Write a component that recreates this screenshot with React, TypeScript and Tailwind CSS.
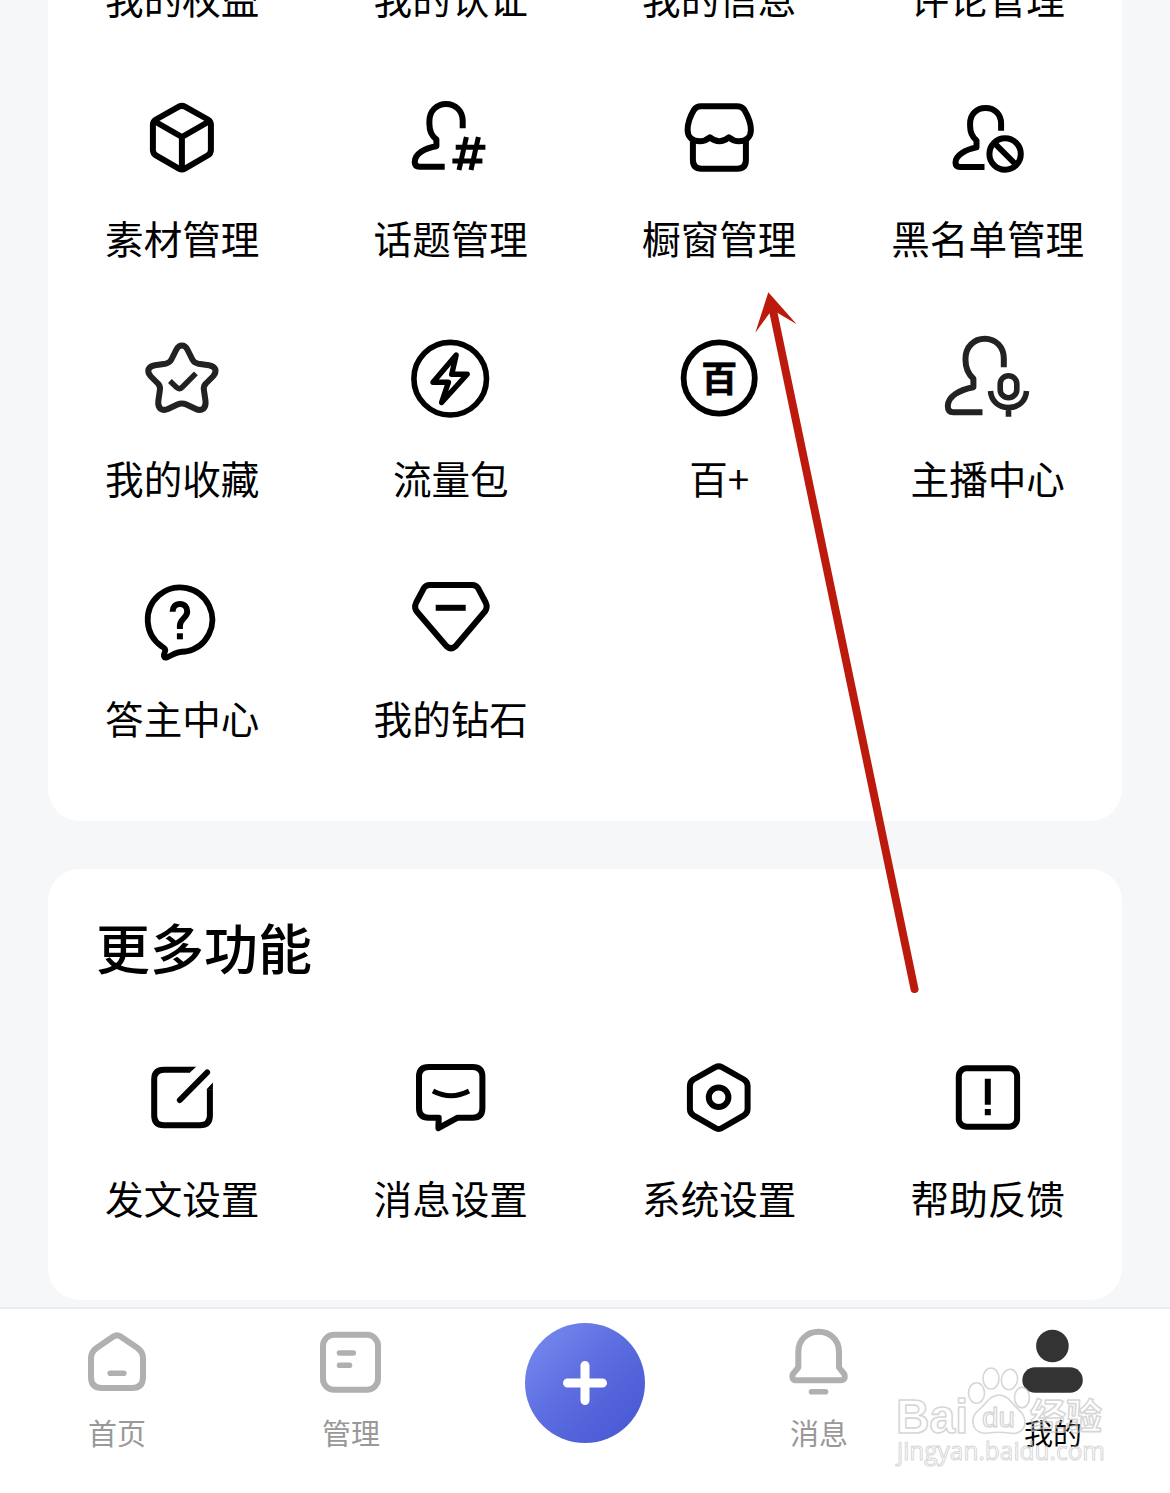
import React from "react";

type Item = { label: string; icon?: React.ReactNode };

/* Icons share one drawing sheet; every cell shows its own 108px window of it. */
const columnX = [128.1, 397.3, 665.1, 934.2];

const cube = (
  <>
    <path d="M179 106.7Q182 105 185 106.7L208 119.5Q211 121.3 211 125V150Q211 153.5 208 155.3L185 168.6Q182 170.3 179 168.6L156 155.3Q153 153.5 153 150V125Q153 121.3 156 119.5Z" />
    <path d="M155 121.5L182 137L209 121.5M182 137V169" />
  </>
);

const topic = (
  <>
    <path d="M463 128.3V121C463 111 456 104 446.3 104C437 104 429.7 111 429.7 121V124C429.7 131 432 136 436.7 139.5V146.2C425 148 415 154 415 162Q415 166.7 420 166.7H445" />
    <path strokeWidth="5" d="M456 147.3H485.7M452.7 161H482.7M466.7 137L459.3 170M478.7 137L471.3 170" />
  </>
);

const shop = (
  <>
    <path d="M701 106.3H737Q742 106.3 744.5 110C747.5 115 751 123 751 130C751 137 746 141.3 739 141.3Q734 141.3 729 137.3Q724.5 141.3 719.5 141.3Q714.5 141.3 710 137.3Q705 141.3 700 141.3C692.5 141.3 687.7 137 687.7 130C687.7 123 691 115 694 110Q696.5 106.3 701 106.3Z" />
    <path d="M693 139V160Q693 168.7 701.5 168.7H737.5Q746 168.7 746 160V139" />
  </>
);

const blocked = (
  <>
    <path d="M1001.3 130.7V123.5C1001.3 114.5 995 108 985.8 108C976.6 108 970.3 114.5 970.3 123.5V126C970.3 132.5 972.5 137 976.7 140.5V147.4C966 149.5 955.7 155 955.7 162.5Q955.7 167 960.5 167H984.7" />
    <circle cx="1005.3" cy="154" r="15.7" />
    <path d="M995 143.5L1016 164.5" />
  </>
);

const star = (
  <g stroke="#222">
    <path d="M182 345.5Q185.5 345.5 187.5 349.5L192.5 359.5Q194.3 363 198.5 363.7L209 365.2Q214 366 215.5 369.5Q216.3 373 213 376.5L206 383.5Q203.3 386 204 390L205.6 401Q206.2 406 203.4 408.8Q200.2 411 195.5 408.7L186.5 404.5Q182 402.3 177.5 404.5L168.5 408.7Q163.8 411 160.6 408.8Q157.8 406 158.4 401L160 390Q160.7 386 158 383.5L151 376.5Q147.7 373 148.5 369.5Q150 366 155 365.2L165.5 363.7Q169.7 363 171.5 359.5L176.5 349.5Q178.5 345.5 182 345.5Z" />
    <path strokeWidth="5.4" d="M170 381L176.5 387.3Q179.5 390 182.5 387L196 373.3" />
  </g>
);

const bolt = (
  <>
    <circle cx="450.5" cy="378.7" r="36.3" strokeWidth="5.6" />
    <path strokeWidth="5.4" d="M456.5 355L452 374.3H467.5L441.9 402.5L448.7 382.3H433.3Z" />
  </>
);

const hundred = (
  <>
    <circle cx="719.3" cy="378" r="35.6" strokeWidth="5.8" />
    <text x="719.3" y="392" textAnchor="middle" stroke="#000" strokeWidth="0.6" fill="#000" className="text-[36px] font-bold">
      百
    </text>
  </>
);

const anchor = (
  <g stroke="#222">
    <path d="M1004 367.3V358.5C1004 347 996 338.7 985 338.7C974 338.7 965.7 347 965.7 358.5V360C965.7 368 968.5 374 973.6 378.8V387.2C960 389.5 948 396.5 948 406Q948 412.3 953.5 412.3H982.7" />
    <rect x="1000.4" y="375.7" width="16.6" height="22" rx="8.3" strokeWidth="5.6" />
    <path strokeWidth="5.6" d="M990.7 391C991.5 401 998.5 407.5 1008.7 407.5C1019 407.5 1026 401 1026.7 391M1008.7 407V416.7" />
  </g>
);

const question = (
  <>
    <path strokeWidth="5.8" d="M162 646.5A32.3 32.3 0 1 1 186 651.5Q178 651.5 172 655L167 657.5Q163.5 658.5 164 655L165.2 651Q166 648.5 162 646.5Z" />
    <path d="M172.7 611.8C172.7 607 175.5 604 180 604C184.5 604 187.3 607 187.3 611.5C187.3 618 180 619 180 625.5V629" />
    <rect x="177" y="633.3" width="6" height="6" fill="#000" stroke="none" />
  </>
);

const diamond = (
  <>
    <path d="M430 585H472.5Q476.5 585 478.5 588.3L486 602.5Q488.3 607.5 485 611.8L456 646Q451.3 650.5 446.6 646L417.3 611.8Q414 607.5 416.5 602.5L424 588.3Q426 585 430 585Z" />
    <path d="M436 607.8H466" />
  </>
);

const edit = (
  <>
    <path d="M190 1069.8H164Q154.3 1069.8 154.3 1079.5V1115.5Q154.3 1125.3 164 1125.3H200Q210 1125.3 210 1115.5V1089.3" />
    <path stroke="none" fill="#000" d="M189.5 1066.8H196.3L189.5 1073ZM213 1082.5V1089.6H206.5Z" />
    <path strokeLinecap="round" d="M180 1100L207.2 1072.5" />
  </>
);

const message = (
  <>
    <path d="M429 1067H473Q482.7 1067 482.7 1076.7V1108Q482.7 1117.7 473 1117.7H458L438.7 1128.2L439 1117.7H429Q419.3 1117.7 419.3 1108V1076.7Q419.3 1067 429 1067Z" />
    <path strokeWidth="5" d="M433.3 1091Q451.3 1100.5 469.3 1091" />
  </>
);

const system = (
  <>
    <path d="M715.5 1067.2Q718.8 1065.2 722 1067.2L744 1079.5Q747.7 1081.8 747.7 1086V1109Q747.7 1113 744 1115.3L722 1128Q718.8 1130 715.5 1128L693.5 1115.3Q690 1113 690 1109V1086Q690 1081.8 693.5 1079.5Z" />
    <circle cx="718.7" cy="1097.3" r="9.8" />
  </>
);

const feedback = (
  <>
    <rect x="959" y="1068.2" width="58.3" height="58.5" rx="8" />
    <path d="M988 1078.7V1104.7M988 1109V1115.3" />
  </>
);

const manageRows: Item[][] = [
  [{ label: "我的权益" }, { label: "我的认证" }, { label: "我的信息" }, { label: "评论管理" }],
  [
    { label: "素材管理", icon: cube },
    { label: "话题管理", icon: topic },
    { label: "橱窗管理", icon: shop },
    { label: "黑名单管理", icon: blocked },
  ],
  [
    { label: "我的收藏", icon: star },
    { label: "流量包", icon: bolt },
    { label: "百+", icon: hundred },
    { label: "主播中心", icon: anchor },
  ],
  [
    { label: "答主中心", icon: question },
    { label: "我的钻石", icon: diamond },
  ],
];

const moreRow: Item[] = [
  { label: "发文设置", icon: edit },
  { label: "消息设置", icon: message },
  { label: "系统设置", icon: system },
  { label: "帮助反馈", icon: feedback },
];

function Row({ items, sheetY }: { items: Item[]; sheetY: number }) {
  return (
    <div className="grid h-60 grid-cols-4">
      {items.map((item, i) => (
        <div key={item.label} className="flex flex-col items-center pt-6">
          <svg
            viewBox={`${columnX[i]} ${sheetY} 108 108`}
            className="size-[108px] shrink-0"
            fill="none"
            stroke="#000"
            strokeWidth="6"
            strokeLinejoin="round"
          >
            {item.icon}
          </svg>
          <span className="mt-[17px] text-[38.6px] leading-[56px] whitespace-nowrap text-black">{item.label}</span>
        </div>
      ))}
    </div>
  );
}

const homeIcon = (
  <>
    <path d="M113 1336.7Q117 1334 121 1336.7L137.5 1348Q143 1352 143 1358V1377Q143 1388 132 1388H102Q91 1388 91 1377V1358Q91 1352 96.5 1348Z" />
    <path strokeWidth="5.6" d="M110.2 1373.3H123.8" />
  </>
);

const manageIcon = (
  <>
    <rect x="323" y="1334.8" width="55" height="55" rx="11" />
    <path strokeWidth="5.6" d="M339.5 1353H353.3M339.5 1365.3H349.5" />
  </>
);

const bellIcon = (
  <>
    <path d="M798.3 1352C798.3 1340 807 1331.8 818.6 1331.8C830.3 1331.8 839 1340 839 1352V1367.5L844.3 1374.2Q846.2 1380.3 840.5 1380.3H796.8Q791 1380.3 792.8 1374.2L798.3 1367.5Z" />
    <path strokeWidth="5.6" d="M811.5 1391.7H825.5" />
  </>
);

const meIcon = (
  <g fill="#333" stroke="none">
    <circle cx="1052.4" cy="1346" r="16.3" />
    <rect x="1022.3" y="1367.3" width="60.5" height="25.4" rx="12.7" />
  </g>
);

function Tab({ label, x, active, children }: { label: string; x: number; active?: boolean; children: React.ReactNode }) {
  return (
    <div className="flex flex-col items-center pt-4">
      <svg
        viewBox={`${x} 1325 72 72`}
        className="size-[72px]"
        fill="none"
        stroke="#b0b0b0"
        strokeWidth="6"
        strokeLinecap="round"
        strokeLinejoin="round"
      >
        {children}
      </svg>
      <span className={`mt-[15px] text-[29px] leading-10 ${active ? "text-black" : "text-[#999]"}`}>{label}</span>
    </div>
  );
}

function Watermark() {
  return (
    <svg
      viewBox="890 1360 222 112"
      className="pointer-events-none absolute top-[1360px] left-[890px] h-[112px] w-[222px]"
      fill="#fff"
      fillOpacity="0.12"
      stroke="#c4c4c4"
      strokeOpacity="0.7"
      strokeWidth="1.6"
      strokeLinejoin="round"
    >
      <text x="896" y="1433" textLength="72" lengthAdjust="spacingAndGlyphs" className="font-['Liberation_Sans'] text-[48px] font-bold">
        Bai
      </text>
      <ellipse cx="976.5" cy="1393" rx="8" ry="10.3" />
      <ellipse cx="991" cy="1378.5" rx="8" ry="10.5" />
      <ellipse cx="1009.5" cy="1379.5" rx="8" ry="10.3" transform="rotate(10 1009.5 1379.5)" />
      <ellipse cx="1022" cy="1397.5" rx="7.5" ry="10.3" />
      <path d="M999 1395C991 1395 987 1402 982 1407C976 1412 972 1416 973 1423C974 1431 981 1434 988 1433C995 1432 1003 1432 1009 1433C1018 1435 1025 1430 1025 1422C1025 1415 1020 1411 1016 1407C1011 1402 1007 1395 999 1395Z" />
      <text x="982" y="1427" textLength="33" lengthAdjust="spacingAndGlyphs" strokeWidth="1.3" className="font-['Liberation_Sans'] text-[28px]">
        du
      </text>
      <text x="1030" y="1430" textLength="72" className="text-[36px] font-bold">
        经验
      </text>
      <text x="897" y="1460" textLength="208" lengthAdjust="spacingAndGlyphs" strokeWidth="1" className="font-['Open_Sans'] text-[25px]">
        jingyan.baidu.com
      </text>
    </svg>
  );
}

export default function App() {
  return (
    <div className="relative flex h-[1493px] w-[1170px] flex-col overflow-hidden bg-[#f6f7f9] font-['Noto_Sans_CJK_SC',sans-serif]">
      <section className="mx-12 h-[821px] shrink-0 overflow-hidden rounded-b-[32px] bg-white">
        <div className="-mt-[180px]">
          {manageRows.map((items, r) => (
            <Row key={r} items={items} sheetY={84 + (r - 1) * 240} />
          ))}
        </div>
      </section>

      <section className="mx-12 mt-12 h-[431px] shrink-0 rounded-[32px] bg-white">
        <h2 className="h-[151px] pt-[38px] pl-12 text-[54px] leading-[80px] font-medium text-black">更多功能</h2>
        <Row items={moreRow} sheetY={1044} />
      </section>

      <nav className="mt-[7px] grid flex-1 grid-cols-5 border-t-2 border-[#eaecf1] bg-white">
        <Tab label="首页" x={81}>{homeIcon}</Tab>
        <Tab label="管理" x={315}>{manageIcon}</Tab>
        <div className="flex justify-center pt-3.5">
          <button className="flex size-[120px] items-center justify-center rounded-full bg-linear-135 from-[#7b8cf0] via-[#5a6cdf] to-[#4654d0]">
            <svg viewBox="0 0 44 44" className="size-11" stroke="#fff" strokeWidth="9" strokeLinecap="round">
              <path d="M22 4.5V39.5M4.5 22H39.5" />
            </svg>
          </button>
        </div>
        <Tab label="消息" x={783}>{bellIcon}</Tab>
        <Tab label="我的" x={1017} active>{meIcon}</Tab>
      </nav>

      <Watermark />

      <svg viewBox="750 288 174 710" className="pointer-events-none absolute top-[288px] left-[750px] h-[710px] w-[174px]">
        <path d="M772.5 308L914.5 989" stroke="#bc1a0c" strokeWidth="8" strokeLinecap="round" />
        <path d="M768.3 292.3L796.7 324.2L776.5 312.3L769.3 313.5L755.3 332.8Z" fill="#bc1a0c" />
      </svg>
    </div>
  );
}
